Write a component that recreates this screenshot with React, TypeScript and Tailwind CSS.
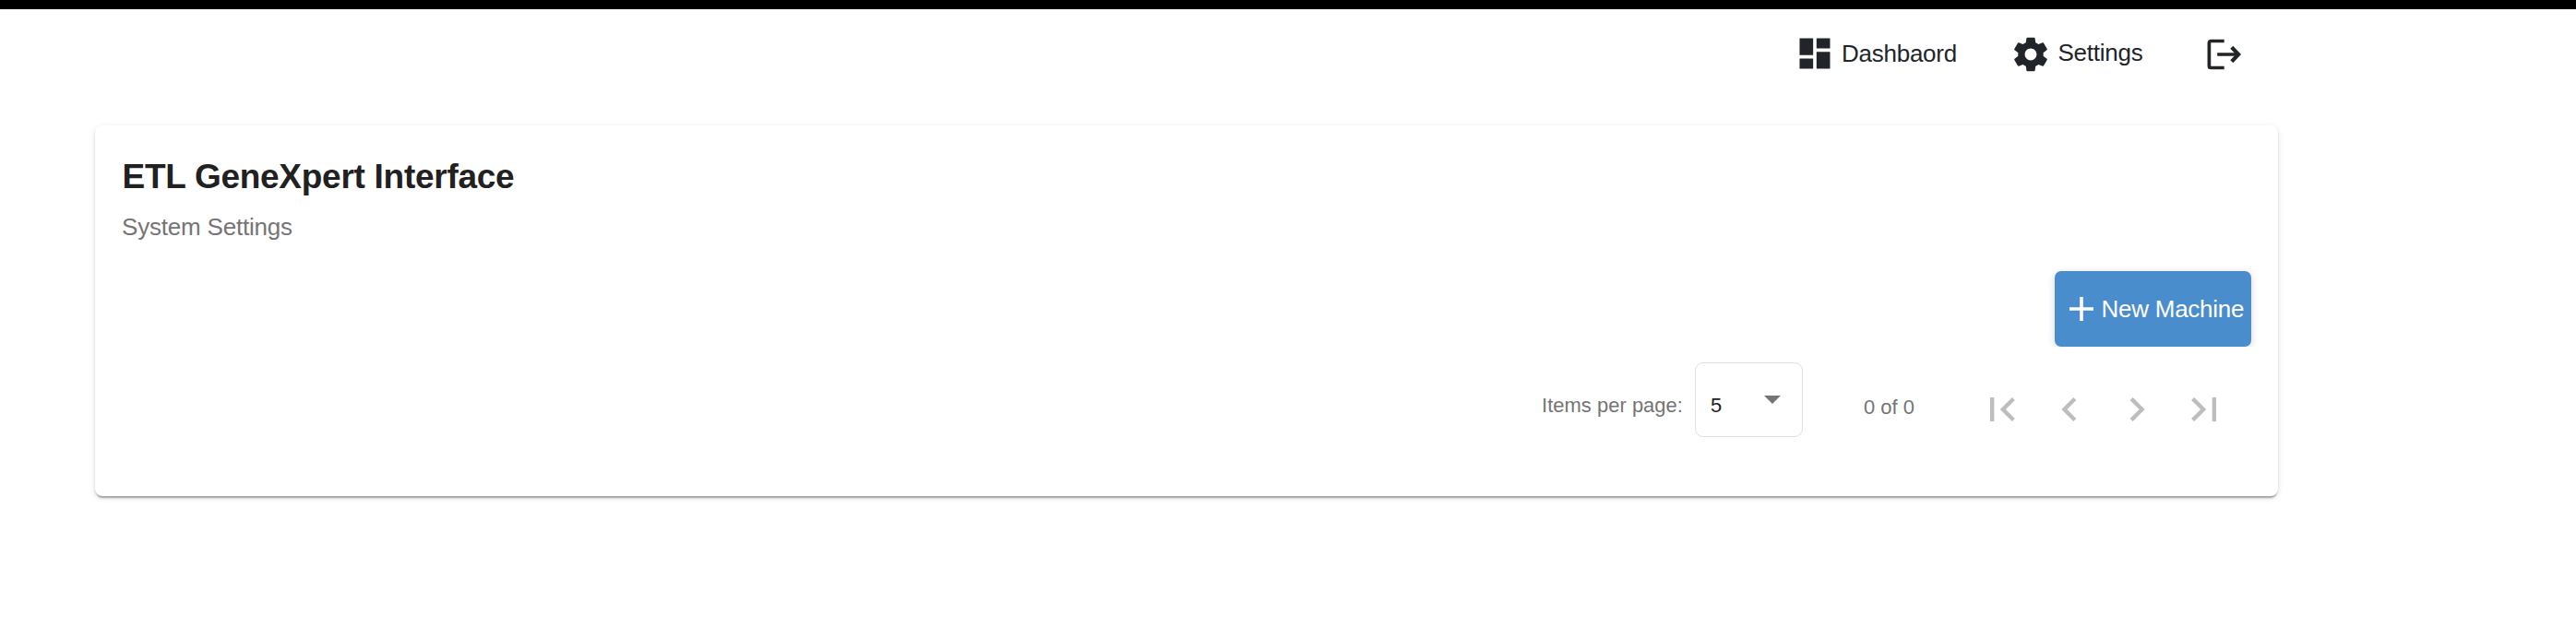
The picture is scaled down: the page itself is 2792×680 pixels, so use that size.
import React from "react";

type IconProps = { d: string; className?: string; viewBox?: string };

function Icon({ d, className = "", viewBox = "0 0 24 24" }: IconProps) {
  return (
    <svg viewBox={viewBox} className={`block shrink-0 ${className}`} fill="currentColor" aria-hidden="true">
      <path d={d} />
    </svg>
  );
}

const icons = {
  dashboard: "M3 13h8V3H3v10zm0 8h8v-6H3v6zm10 0h8V11h-8v10zm0-18v6h8V3h-8z",
  settings:
    "M19.43 12.98c.04-.32.07-.64.07-.98s-.03-.66-.07-.98l2.11-1.65c.19-.15.24-.42.12-.64l-2-3.46c-.12-.22-.39-.3-.61-.22l-2.49 1c-.52-.4-1.08-.73-1.69-.98l-.38-2.65C14.46 2.18 14.25 2 14 2h-4c-.25 0-.46.18-.49.42l-.38 2.65c-.61.25-1.17.59-1.69.98l-2.49-1c-.23-.09-.49 0-.61.22l-2 3.46c-.13.22-.07.49.12.64l2.11 1.65c-.04.32-.07.65-.07.98s.03.66.07.98l-2.11 1.65c-.19.15-.24.42-.12.64l2 3.46c.12.22.39.3.61.22l2.49-1c.52.4 1.08.73 1.69.98l.38 2.65c.03.24.24.42.49.42h4c.25 0 .46-.18.49-.42l.38-2.65c.61-.25 1.17-.59 1.69-.98l2.49 1c.23.09.49 0 .61-.22l2-3.46c.12-.22.07-.49-.12-.64l-2.11-1.65zM12 15.5c-1.93 0-3.5-1.57-3.5-3.5s1.57-3.5 3.5-3.5 3.5 1.57 3.5 3.5-1.57 3.5-3.5 3.5z",
};

const pager = [
  { label: "First page", d: "M18.41 16.59L13.82 12l4.59-4.59L17 6l-6 6 6 6zM6 6h2v12H6z" },
  { label: "Previous page", d: "M15.41 7.41L14 6l-6 6 6 6 1.41-1.41L10.83 12z" },
  { label: "Next page", d: "M10 6L8.59 7.41 13.17 12l-4.58 4.59L10 18l6-6z" },
  { label: "Last page", d: "M5.59 7.41L10.18 12l-4.59 4.59L7 18l6-6-6-6zM16 6h2v12h-2z" },
];

function Header() {
  return (
    <header className="flex h-[126px] items-start border-t-[10px] border-black pl-[1945px] pt-[26px] text-[26px] leading-[44px] tracking-[-0.25px] text-[#212529]">
      <a className="flex w-[234px]">
        <Icon d={icons.dashboard} className="size-[44px]" />
        <span className="ml-[7px]">Dashbaord</span>
      </a>
      <a className="flex w-[208px]">
        <Icon d={icons.settings} className="mt-px size-[44px]" />
        <span className="ml-[7.5px] -mt-px">Settings</span>
      </a>
      <button aria-label="Log out" className="mt-[6px] block">
        <svg viewBox="0 0 42 34" className="block h-[34px] w-[42px]" fill="none" stroke="currentColor" strokeWidth="3.7">
          <path d="M23.7 2.5H9.4a2 2 0 0 0-2 2v25a2 2 0 0 0 2 2h14.3M16.2 17h23" />
          <path d="M31.8 9.2l7.4 7.8-7.4 7.8" strokeWidth="4.2" />
        </svg>
      </button>
    </header>
  );
}

export default function App() {
  return (
    <div className="h-[680px] w-[2792px] overflow-hidden bg-white font-['Liberation_Sans',Arial,sans-serif]">
      <Header />
      <main className="ml-[103px] mt-[10px] h-[402px] w-[2366px] rounded-[8px] bg-white px-[29px] pt-[32px] shadow-[0_4px_2px_-2px_rgba(0,0,0,0.2),0_2px_2px_0_rgba(0,0,0,0.14),0_2px_6px_0_rgba(0,0,0,0.12)]">
        <h1 className="ml-[0.5px] text-[37px] font-bold leading-[48px] tracking-[-0.27px] text-[#212121]">ETL GeneXpert Interface</h1>
        <p className="mt-[8px] text-[26px] leading-[44px] tracking-[-0.2px] text-[#757575]">System Settings</p>
        <div className="mt-[26px] flex justify-end">
          <button className="flex h-[82px] w-[213px] items-center rounded-[7px] bg-[#4a8dcd] pl-[15px] text-[26px] tracking-[-0.25px] text-white shadow-[0_2px_8px_rgba(0,0,0,0.16)] [clip-path:inset(-12px_-12px_0_-12px)]">
            <svg viewBox="0 0 28 28" className="block size-[28px] shrink-0" stroke="currentColor" strokeWidth="3.6">
              <path d="M1 14h26M14 1v26" />
            </svg>
            <span className="ml-[7.5px] whitespace-nowrap">New Machine</span>
          </button>
        </div>
        <div className="mt-[17px] flex h-[82px] items-start justify-end text-[22px] text-[#757575]">
          <span className="mt-[33px] leading-[28px]">Items per page:</span>
          <div className="ml-[13px] flex h-[81px] w-[117px] items-center rounded-[9px] border border-[#e0e0e0] pl-[16px]">
            <span className="mt-[12px] text-[#212121]">5</span>
            <svg viewBox="0 0 18 9" className="ml-[46px] block h-[9px] w-[18px]" fill="currentColor">
              <path d="M0 0h18L9 9z" />
            </svg>
          </div>
          <span className="ml-[66px] mt-[35px] leading-[28px]">0 of 0</span>
          <nav className="ml-[58px] mr-[15px] mt-[14px] flex">
            {pager.map((item) => (
              <button key={item.label} aria-label={item.label} disabled className="flex h-[74px] w-[73px] items-center justify-center text-[#bdbdbd]">
                <Icon d={item.d} className="size-[52px]" />
              </button>
            ))}
          </nav>
        </div>
      </main>
    </div>
  );
}
